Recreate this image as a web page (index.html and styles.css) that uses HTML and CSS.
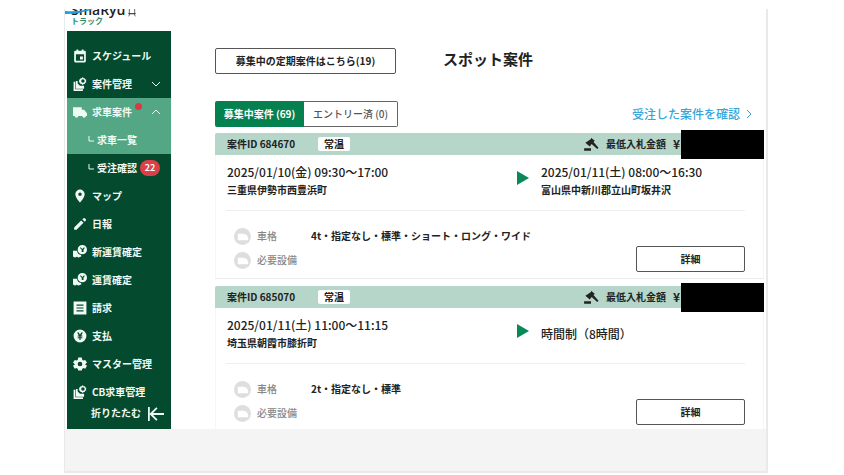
FILE: index.html
```html
<!DOCTYPE html>
<html lang="ja">
  <head>
    <meta charset="UTF-8" />
    <meta name="viewport" content="width=device-width, initial-scale=1.0" />
    <title>スポット案件</title>
    <link rel="stylesheet" href="styles.css">
  </head>
  <body>
    <!-- shared icons -->
    <svg class="sprite" aria-hidden="true">
      <symbol id="calendar" viewBox="0 0 24 24">
        <path fill-rule="evenodd" d="M6 1h3v2h6V1h3v2h2a2 2 0 0 1 2 2v16a2 2 0 0 1-2 2H4a2 2 0 0 1-2-2V5a2 2 0 0 1 2-2h2zM5 9v11h14V9zM12 13h5v5h-5z" />
      </symbol>
      <symbol id="case" viewBox="0 0 24 24">
        <path fill-rule="evenodd" d="M17 0l1 2 2 0 1 2 2 1-1 2 1 2-2 1-1 2h-2l-1 2-2-2h-2l-1-2-2-1 1-2-1-2 2-1 1-2h2zM17 4a3 3 0 1 0 0 6 3 3 0 0 0 0-6z" />
        <path d="M1 8h3v13h13v3H1zM5 7h3v4l4 4h7v5H5z" />
      </symbol>
      <symbol id="truck" viewBox="0 0 24 24">
        <path d="M0 4h15v4h4l5 6v5h-2a3 3 0 0 1-6 0H9a3 3 0 0 1-6 0H0z" />
      </symbol>
      <symbol id="fare" viewBox="0 0 24 24">
        <path d="M0 10h7c0 4 3 7 7 7v3h-2a3 3 0 0 1-5 0H6a3 3 0 0 1-5 0H0z" />
        <path fill-rule="evenodd" d="M16 0a8 8 0 1 0 0 16 8 8 0 0 0 0-16zM13 4l3 3 3-3 1 1-2 3v4h-3V8l-3-3z" />
      </symbol>
      <symbol id="pin" viewBox="0 0 24 24">
        <path fill-rule="evenodd" d="M12 1a8 8 0 0 0-8 8c0 6 8 14 8 14s8-8 8-14a8 8 0 0 0-8-8zm0 5a3 3 0 1 1 0 6 3 3 0 0 1 0-6z" />
      </symbol>
      <symbol id="pencil" viewBox="0 0 24 24">
        <path d="M2 18L14 6l4 4L6 22H2zM16 4l2-2q1-1 2 0l2 2q1 1 0 2l-2 2z" />
      </symbol>
      <symbol id="bill" viewBox="0 0 24 24">
        <path fill-rule="evenodd" d="M1 1h22v22H1zM6 6v2h12V6zM6 11v2h12v-2zM6 16v2h12v-2z" />
      </symbol>
      <symbol id="yen" viewBox="0 0 24 24">
        <path fill-rule="evenodd" d="M12 1a11 11 0 1 0 0 22 11 11 0 0 0 0-22zM7 6h3l2 4 2-4h3l-3 5h2v2h-3v1h3v2h-3v3h-2v-3H8v-2h3v-1H8v-2h2z" />
      </symbol>
      <symbol id="gear" viewBox="0 0 24 24">
        <path fill-rule="evenodd" d="M9 1h6l1 4 2 1 3-1 3 5-3 2v1l3 2-3 5-3-1-2 1-1 3H9l-1-3-2-1-3 1-3-5 3-2v-1l-3-2 3-5 3 1 2-1zM12 8a4 4 0 1 0 0 8 4 4 0 0 0 0-8z" />
      </symbol>
      <symbol id="corner" viewBox="0 0 6 10">
        <path d="M1 1v5h5" fill="none" stroke="currentColor" />
      </symbol>
      <symbol id="down" viewBox="0 0 10 10">
        <path d="M1 3l4 4 4-4" fill="none" stroke="currentColor" />
      </symbol>
      <symbol id="up" viewBox="0 0 10 10">
        <path d="M1 7l4-4 4 4" fill="none" stroke="currentColor" />
      </symbol>
      <symbol id="collapse" viewBox="0 0 18 18">
        <path d="M1 1v16M18 9H3M10 2L3 9l7 7" fill="none" stroke="currentColor" stroke-width="2" />
      </symbol>
      <symbol id="gavel" viewBox="0 0 24 24">
        <path d="M12 1l6 5-2 2 8 9-2 2-9-8-3 4-7-6 3-2 6-4zM1 18h11v4H1z" />
      </symbol>
      <symbol id="spec" viewBox="0 0 18 18">
        <circle cx="9" cy="9" r="9" fill="#dedede" />
        <path d="M4 6h7v1h2l2 3v3H4z" fill="#fff" />
      </symbol>
    </svg>

    <div class="shell">
      <header class="logo">
        <div class="logo-name">SmaRyu<svg class="logo-mark" viewBox="0 0 12 12"><path d="M2 0v7h8V0M0 7h12M3 7l-2 4M9 7l2 4" fill="none" stroke="currentColor" /></svg></div>
        <div class="logo-sub">トラック</div>
        <svg class="swoosh" viewBox="0 0 28 6"><path d="M0 2Q14 3 24 0h4Q16 5 0 5z" fill="#1aa0e0" /></svg>
      </header>

      <div class="app">
        <nav class="sidebar">
          <ul class="menu">
            <li><a class="item" href="#"><svg class="icon"><use href="#calendar" /></svg>スケジュール</a></li>
            <li><a class="item" href="#"><svg class="icon"><use href="#case" /></svg>案件管理<svg class="arrow"><use href="#down" /></svg></a></li>
            <li><a class="item active" href="#"><svg class="icon"><use href="#truck" /></svg><span class="notify">求車案件</span><svg class="arrow"><use href="#up" /></svg></a></li>
            <li><a class="item sub active" href="#"><svg class="corner"><use href="#corner" /></svg>求車一覧</a></li>
            <li><a class="item sub" href="#"><svg class="corner"><use href="#corner" /></svg>受注確認<span class="badge">22</span></a></li>
            <li><a class="item" href="#"><svg class="icon"><use href="#pin" /></svg>マップ</a></li>
            <li><a class="item" href="#"><svg class="icon"><use href="#pencil" /></svg>日報</a></li>
            <li><a class="item" href="#"><svg class="icon"><use href="#fare" /></svg>新運賃確定</a></li>
            <li><a class="item" href="#"><svg class="icon"><use href="#fare" /></svg>運賃確定</a></li>
            <li><a class="item" href="#"><svg class="icon"><use href="#bill" /></svg>請求</a></li>
            <li><a class="item" href="#"><svg class="icon"><use href="#yen" /></svg>支払</a></li>
            <li><a class="item" href="#"><svg class="icon"><use href="#gear" /></svg>マスター管理</a></li>
            <li><a class="item" href="#"><svg class="icon"><use href="#case" /></svg>CB求車管理</a></li>
          </ul>
          <button class="fold" type="button">折りたたむ<svg class="fold-icon"><use href="#collapse" /></svg></button>
        </nav>

        <main class="content">
          <div class="heading">
            <button class="outline regular" type="button">募集中の定期案件はこちら(19)</button>
            <h1 class="title">スポット案件</h1>
          </div>

          <div class="toolbar">
            <div class="tabs">
              <button class="tab selected" type="button">募集中案件 (69)</button>
              <button class="tab" type="button">エントリー済 (0)</button>
            </div>
            <a class="orders" href="#">受注した案件を確認<svg class="next" viewBox="0 0 6 10"><path d="M1 1l4 4-4 4" fill="none" stroke="currentColor" /></svg></a>
          </div>

          <article class="card">
            <div class="card-head">
              <span class="case-id">案件ID 684670</span>
              <span class="temp">常温</span>
              <span class="price"><svg class="gavel"><use href="#gavel" /></svg>最低入札金額<span class="yen">¥</span></span>
              <span class="mask"></span>
            </div>
            <div class="card-body">
              <div class="route">
                <div>
                  <div class="date">2025/01/10(金) 09:30〜17:00</div>
                  <div class="place">三重県伊勢市西豊浜町</div>
                </div>
                <svg class="play" viewBox="0 0 12 14"><path d="M0 0l12 7-12 7z" fill="#088a58" /></svg>
                <div>
                  <div class="date">2025/01/11(土) 08:00〜16:30</div>
                  <div class="place">富山県中新川郡立山町坂井沢</div>
                </div>
              </div>
              <div class="detail">
                <dl class="specs">
                  <dt><svg class="spec-icon"><use href="#spec" /></svg>車格</dt>
                  <dd>4t・指定なし・標準・ショート・ロング・ワイド</dd>
                  <dt><svg class="spec-icon"><use href="#spec" /></svg>必要設備</dt>
                  <dd></dd>
                </dl>
                <button class="outline more" type="button">詳細</button>
              </div>
            </div>
          </article>

          <article class="card">
            <div class="card-head">
              <span class="case-id">案件ID 685070</span>
              <span class="temp">常温</span>
              <span class="price"><svg class="gavel"><use href="#gavel" /></svg>最低入札金額<span class="yen">¥</span></span>
              <span class="mask"></span>
            </div>
            <div class="card-body">
              <div class="route">
                <div>
                  <div class="date">2025/01/11(土) 11:00〜11:15</div>
                  <div class="place">埼玉県朝霞市膝折町</div>
                </div>
                <svg class="play" viewBox="0 0 12 14"><path d="M0 0l12 7-12 7z" fill="#088a58" /></svg>
                <div class="date hours">時間制（8時間）</div>
              </div>
              <div class="detail">
                <dl class="specs">
                  <dt><svg class="spec-icon"><use href="#spec" /></svg>車格</dt>
                  <dd>2t・指定なし・標準</dd>
                  <dt><svg class="spec-icon"><use href="#spec" /></svg>必要設備</dt>
                  <dd></dd>
                </dl>
                <button class="outline more" type="button">詳細</button>
              </div>
            </div>
          </article>
        </main>
      </div>
      <footer class="footer"></footer>
    </div>
  </body>
</html>
```

FILE: styles.css
```css
* {
  box-sizing: border-box;
}

body {
  display: flex;
  min-height: 100vh;
  margin: 0;
  padding: 9px 76px 2px 64px;
  background: #fff;
  color: #222;
  font: 700 10px/14px "Noto Sans CJK JP", sans-serif;
}

button {
  font: inherit;
  color: inherit;
  padding: 0;
  cursor: pointer;
}

a {
  color: inherit;
  text-decoration: none;
}

svg {
  flex: none;
  fill: currentColor;
}

.sprite {
  position: absolute;
  width: 0;
  height: 0;
}

.shell {
  display: flex;
  flex-direction: column;
  flex: 1;
  min-width: 0;
  border: solid #e9e9e9;
  border-width: 0 2px 2px 1px;
}

/* Logo */
.logo {
  position: relative;
  height: 22px;
  padding-left: 6px;
  overflow: hidden;
}

/* the top half of the name runs out of the header */
.logo-name {
  display: flex;
  align-items: flex-start;
  height: 7px;
  font: 600 14px/1px "Open Sans", sans-serif;
}

.logo-mark {
  width: 12px;
  height: 8px;
}

.logo-sub {
  font-size: 8px;
  line-height: 10px;
  color: #2c8d68;
}

.swoosh {
  position: absolute;
  top: 0;
  left: 0;
  width: 28px;
  height: 6px;
}

.app {
  display: flex;
}

/* Sidebar */
.sidebar {
  flex: none;
  width: 104px;
  margin-left: 2px;
  padding-top: 11px;
  background: #034a2e;
  color: #f1faf5;
}

.menu {
  margin: 0;
  padding: 0;
  list-style: none;
}

.item {
  display: flex;
  align-items: center;
  gap: 5px;
  height: 28px;
  padding: 0 10px 0 6px;
  white-space: nowrap;
}

.item.active {
  background: #53a785;
}

.item.sub {
  gap: 3px;
  padding: 0 0 0 21px;
}

.icon {
  width: 14px;
  height: 14px;
}

.arrow {
  width: 10px;
  height: 10px;
  margin-left: auto;
}

.corner {
  width: 6px;
  height: 10px;
}

.notify {
  position: relative;
}

.notify::after {
  content: "";
  position: absolute;
  top: -2px;
  right: -10px;
  width: 7px;
  height: 7px;
  border-radius: 50%;
  background: #d93a45;
}

.badge {
  width: 20px;
  border-radius: 8px;
  background: #dc3f48;
  font-size: 9px;
  line-height: 16px;
  text-align: center;
}

.fold {
  display: flex;
  align-items: flex-start;
  gap: 6px;
  height: 23px;
  padding-left: 24px;
  border: 0;
  background: none;
}

.fold-icon {
  width: 18px;
  height: 16px;
}

/* Content */
.content {
  flex: 1;
  min-width: 0;
  padding: 17px 2px 0 44px;
}

.heading {
  display: flex;
  align-items: flex-start;
  gap: 47px;
}

.outline {
  height: 26px;
  border: 1px solid #555;
  border-radius: 2px;
  background: #fff;
}

.regular {
  width: 181px;
}

.title {
  margin: 0;
  font-size: 15px;
  line-height: 22px;
}

.toolbar {
  display: flex;
  align-items: center;
  justify-content: space-between;
  margin: 27px 0 6px;
}

.tabs {
  display: flex;
}

.tab {
  width: 94px;
  height: 26px;
  border: 1px solid #666;
  border-left: 0;
  border-radius: 0 2px 2px 0;
  background: #fff;
  color: #555;
  font-weight: 500;
}

.tab.selected {
  width: 89px;
  border: 0;
  border-radius: 2px 0 0 2px;
  background: #04814f;
  color: #fff;
  font-weight: 700;
}

.orders {
  display: flex;
  align-items: center;
  gap: 6px;
  padding-right: 12px;
  color: #36a5dc;
  font-size: 12px;
  font-weight: 500;
}

.next {
  width: 6px;
  height: 10px;
}

/* Cards */
.card {
  margin-bottom: 7px;
  border-bottom: 1px solid #ececec;
}

.card:last-child {
  margin-bottom: 0;
  border-bottom: 0;
}

.card-head {
  position: relative;
  display: flex;
  align-items: center;
  height: 22px;
  padding: 0 84px 0 12px;
  border-radius: 2px 2px 0 0;
  background: #b5d6c8;
}

.case-id {
  width: 91px;
}

.temp {
  width: 32px;
  border-radius: 2px;
  background: #fff;
  text-align: center;
}

.price {
  display: flex;
  align-items: center;
  gap: 7px;
  margin-left: auto;
}

.yen {
  font-size: 12px;
}

.gavel {
  width: 16px;
  height: 15px;
}

/* covers the amount */
.mask {
  position: absolute;
  top: -3px;
  right: 0;
  width: 83px;
  height: 29px;
  background: #000;
}

.card-body {
  padding: 0 18px 6px 10px;
  border: solid #f5f5f5;
  border-width: 0 1px;
}

.card:last-child .card-body {
  padding-bottom: 4px;
}

.route {
  display: grid;
  grid-template-columns: 290fr 24px 204fr;
  padding: 8px 0 11px 1px;
  border-bottom: 1px solid #eee;
}

.date {
  font-size: 12px;
  font-weight: 500;
  line-height: 18px;
}

.place {
  line-height: 18px;
}

.play {
  width: 12px;
  height: 14px;
  margin-top: 8px;
}

.hours {
  align-self: center;
}

.detail {
  display: flex;
  align-items: flex-end;
  justify-content: space-between;
  padding-top: 13px;
}

.specs {
  display: grid;
  grid-template-columns: 77px auto;
  grid-auto-rows: 24px;
  align-items: center;
  margin: 0;
  padding-left: 8px;
}

.specs dt {
  display: flex;
  align-items: center;
  gap: 6px;
  color: #888;
  font-weight: 500;
}

.specs dd {
  margin: 0;
}

.spec-icon {
  width: 17px;
  height: 17px;
}

.more {
  width: 109px;
}

.footer {
  flex: 1;
  background: #f4f4f4;
}
```
